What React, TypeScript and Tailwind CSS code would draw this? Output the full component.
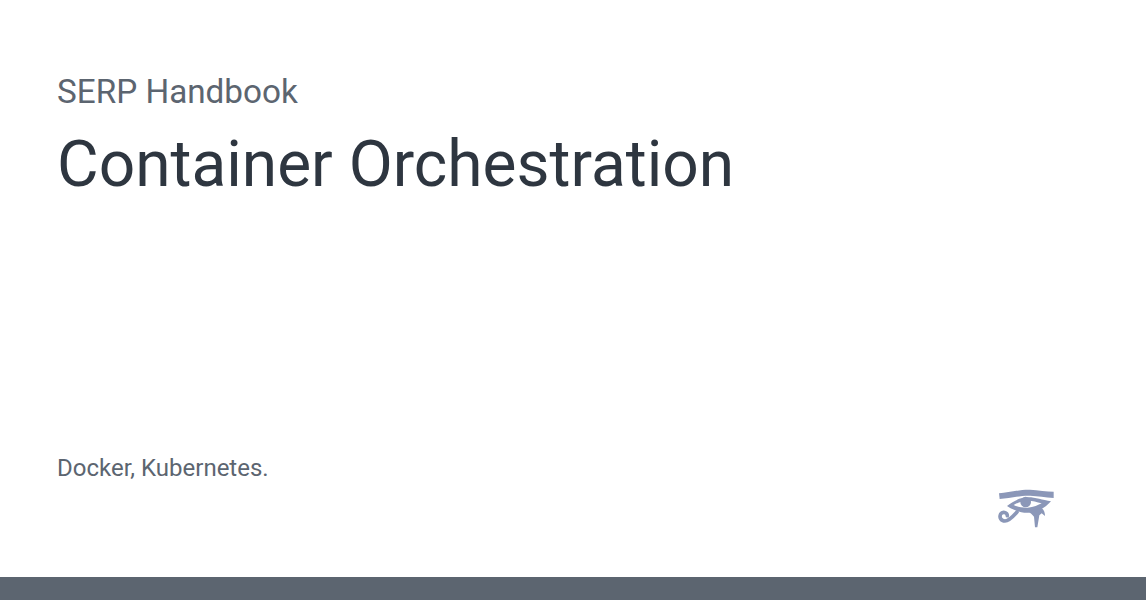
export default function App() {
  return (
    <div className="flex h-[600px] w-full flex-col bg-white font-['Roboto',sans-serif]">
      <main className="flex flex-1 flex-col px-[57px] pt-[70px]">
        <p className="text-[33.28px] leading-[44px] text-[#5c6570]">SERP Handbook</p>
        <h1 className="mt-[11px] text-[64px] leading-[80px] font-normal text-[#2e3640]">Container Orchestration</h1>
        <p className="mt-[247px] text-[24px] leading-[32px] text-[#5c6570]">Docker, Kubernetes.</p>
        <div className="flex justify-end pr-[36px] pt-[4px]">
          <svg width="80" height="60" viewBox="0 0 240 180" fill="none" className="-mt-[10px] -mr-[12px] shrink-0" aria-hidden="true">
            <path d="M42 46 C72 44 105 34 135 35 C160 36 185 41 206 41 L206 60 C180 58 160 54 135 53 C105 52 72 62 44 63 Z" fill="#8b97b8" />
            <path d="M66 84 C88 66 110 58 130 58 C152 58 172 66 198 70 C182 88 160 102 130 104 C106 105 84 96 66 84 Z M86 81 C98 87 115 90 128 89 C146 88 160 81 170 76 C155 72 143 68 130 68 C115 68 100 72 86 81 Z" fill="#8b97b8" fillRule="evenodd" />
            <circle cx="122" cy="72" r="16" fill="#8b97b8" />
            <path d="M128 100 L170 90 C178 97 180 106 180 114 L170 106 L163 112 L157 148 L150 148 L147 116 C142 110 136 105 128 100 Z" fill="#8b97b8" />
            <path d="M96 102 C85 114 72 129 60 129 C48 129 42 118 47 108 C52 100 67 102 67 113" stroke="#8b97b8" strokeWidth="11" strokeLinecap="round" />
          </svg>
        </div>
      </main>
      <div className="h-[23px] shrink-0 bg-[#5c6570]" />
    </div>
  );
}
